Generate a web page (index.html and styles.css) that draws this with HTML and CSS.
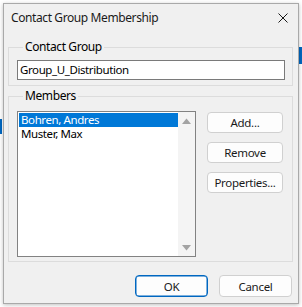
FILE: index.html
```
<!DOCTYPE html>
<html lang="en">
<head>
    <meta charset="UTF-8">
    <meta name="viewport" content="width=device-width, initial-scale=1.0">
    <title>Contact Group Membership</title>
    <link rel="stylesheet" href="styles.css">
</head>
<body>
    <div class="mark-left"></div>
    <div class="mark-right"></div>

    <div class="dialog">
        <div class="titlebar">
            <span class="title">Contact Group Membership</span>
            <svg class="close" width="10" height="10" viewBox="0 0 10 10">
                <path d="M0.5 0.5 L9.5 9.5 M9.5 0.5 L0.5 9.5" stroke="#1a1a1a" stroke-width="1" fill="none"/>
            </svg>
        </div>

        <fieldset class="group">
            <legend>Contact Group</legend>
            <div class="textbox">Group_U_Distribution</div>
        </fieldset>

        <fieldset class="group members">
            <legend>Members</legend>
            <div class="members-row">
                <div class="listbox">
                    <div class="items">
                        <div class="item selected">Bohren, Andres</div>
                        <div class="item">Muster, Max</div>
                    </div>
                    <div class="scrollbar">
                        <svg width="9" height="6" viewBox="0 0 9 6"><path d="M0 6 L4.5 0.5 L9 6 Z" fill="#a3a3a3"/></svg>
                        <svg width="9" height="6" viewBox="0 0 9 6"><path d="M0 0 L4.5 5.5 L9 0 Z" fill="#a3a3a3"/></svg>
                    </div>
                </div>
                <div class="side-buttons">
                    <button type="button" class="btn">Add...</button>
                    <button type="button" class="btn">Remove</button>
                    <button type="button" class="btn">Properties...</button>
                </div>
            </div>
        </fieldset>

        <div class="footer">
            <button type="button" class="btn btn-default">OK</button>
            <button type="button" class="btn">Cancel</button>
        </div>
    </div>
</body>
</html>
```
FILE: styles.css
```
body {
    margin: 0;
    background-color: #ffffff;
    font-family: "Noto Sans", "Open Sans", sans-serif;
    font-size: 11.5px;
    letter-spacing: -0.4px;
    color: #000;
    position: relative;
    height: 307px;
    overflow: hidden;
}

/* bits of the window behind the dialog */
.mark-left {
    position: absolute;
    left: 0;
    top: 119px;
    width: 2px;
    height: 15px;
    background-color: #0067c0;
}

.mark-right {
    position: absolute;
    left: 299px;
    top: 47px;
    width: 3px;
    height: 17px;
    background-color: #0067c0;
}

.dialog {
    position: relative;
    box-sizing: border-box;
    margin: 3px 0 0 3px;
    width: 296px;
    height: 301px;
    background-color: #f0f0f0;
    border: 1px solid #a9a9a9;
    box-shadow: 0 1px 4px rgba(0, 0, 0, 0.25);
}

.titlebar {
    height: 27px;
    display: flex;
    align-items: center;
    justify-content: space-between;
    padding: 0 10px 0 7px;
}

.title {
    font-size: 12px;
    color: #1a1a1a;
}

.group {
    margin: 8px 5px 0 4px;
    padding: 5px 7px 5px 8px;
    border: 1px solid #dcdcdc;
    border-radius: 0;
}

.group legend {
    padding: 0 2px;
    margin-left: 6px;
    line-height: 16px;
    font-size: 12px;
}

.textbox {
    box-sizing: border-box;
    height: 20px;
    background-color: #fff;
    border: 1px solid #7a7a7a;
    padding: 0 2px;
    line-height: 18px;
}

.members {
    margin-top: 2px;
    padding-top: 7px;
    padding-bottom: 4px;
}

.members-row {
    display: flex;
    gap: 11px;
}

.listbox {
    box-sizing: border-box;
    width: 179px;
    height: 146px;
    background-color: #fff;
    border: 1px solid #828282;
    display: flex;
}

.items {
    flex: 1;
    padding: 1px 0 0 1px;
}

.item {
    height: 14px;
    line-height: 14px;
    padding-left: 2px;
}

.item.selected {
    background-color: #0078d7;
    color: #fff;
}

.scrollbar {
    width: 17px;
    background-color: #f4f4f4;
    display: flex;
    flex-direction: column;
    justify-content: space-between;
    align-items: center;
    padding: 6px 0 5px;
}

.side-buttons {
    display: flex;
    flex-direction: column;
    gap: 9px;
    padding-top: 1px;
}

.btn {
    box-sizing: border-box;
    width: 76px;
    height: 21px;
    padding: 0;
    font-family: inherit;
    font-size: 11.5px;
    letter-spacing: -0.3px;
    color: #1a1a1a;
    background-color: #fdfdfd;
    border: 1px solid #d0d0d0;
    border-radius: 4px;
}

.footer {
    display: flex;
    justify-content: flex-end;
    gap: 11px;
    padding: 13px 6px 0 0;
}

.footer .btn {
    width: 73px;
    height: 22px;
}

.btn-default {
    border: 1px solid #0067c0;
    box-shadow: inset 0 0 0 0.5px #0067c0;
}
```
